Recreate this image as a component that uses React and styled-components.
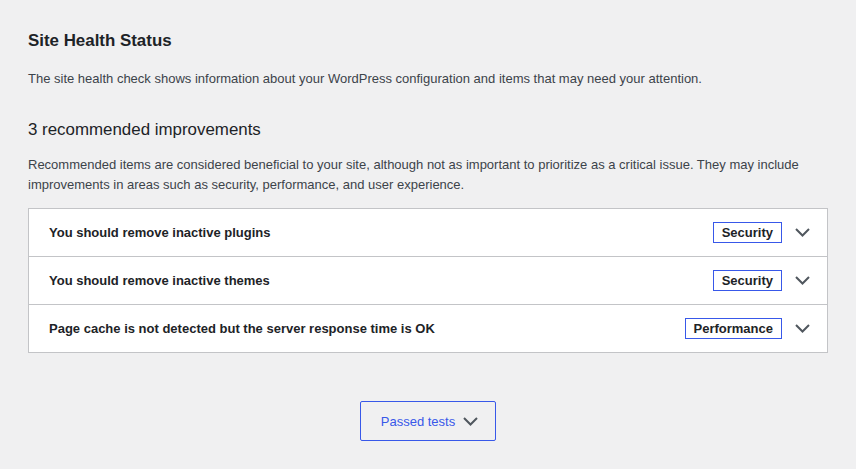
import React from "react";
import styled, { createGlobalStyle } from "styled-components";

const GlobalStyle = createGlobalStyle`
  html, body {
    margin: 0;
    padding: 0;
    background: #f0f0f1;
  }
  body {
    font-family: "Liberation Sans", Arial, sans-serif;
    font-size: 13px;
    color: #1d2327;
  }
`;

const Page = styled.div`
  padding: 29px 28px 0;
  min-height: 469px;
  box-sizing: border-box;
`;

const Title = styled.h2`
  margin: 0;
  font-size: 16.9px;
  line-height: 24px;
  font-weight: 700;
  color: #1d2327;
`;

const Text = styled.p`
  margin: ${p => p.$top || 0}px 0 0;
  font-size: 13px;
  line-height: 20px;
  color: #3c434a;
`;

const SubTitle = styled.h3`
  margin: 29px 0 0;
  font-size: 16.9px;
  line-height: 24px;
  font-weight: 400;
  color: #1d2327;
`;

const Accordion = styled.div`
  margin-top: 13px;
  background: #fff;
  border: 1px solid #c3c4c7;
  border-bottom: none;
`;

const Row = styled.div`
  display: flex;
  align-items: center;
  height: 47px;
  padding: 0 17px 0 20px;
  border-bottom: 1px solid #c3c4c7;
`;

const RowTitle = styled.span`
  flex: 1;
  font-weight: 700;
  font-size: 13px;
  color: #1d2327;
`;

const Badge = styled.span`
  display: inline-flex;
  align-items: center;
  height: 19px;
  padding: 0 8px;
  border: 1px solid #3858e9;
  font-weight: 700;
  font-size: 13px;
  color: #1d2327;
  margin-right: 13px;
`;

const Footer = styled.div`
  display: flex;
  justify-content: center;
  margin-top: 48px;
`;

const PassedButton = styled.button`
  display: flex;
  align-items: center;
  gap: 8px;
  height: 40px;
  padding: 0 17px 0 20px;
  background: transparent;
  border: 1px solid #3858e9;
  border-radius: 2px;
  font-family: "Liberation Sans", Arial, sans-serif;
  font-size: 13px;
  color: #3858e9;
  cursor: pointer;
`;

const Chevron = () => (
  <svg width="15" height="9" viewBox="0 0 15 9">
    <polyline
      points="1,1 7.5,7.5 14,1"
      fill="none"
      stroke="#50575e"
      strokeWidth="2"
    />
  </svg>
);

const items = [
  { title: "You should remove inactive plugins", badge: "Security" },
  { title: "You should remove inactive themes", badge: "Security" },
  {
    title: "Page cache is not detected but the server response time is OK",
    badge: "Performance"
  }
];

const App = () => {
  return (
    <>
      <GlobalStyle />
      <Page>
        <Title>Site Health Status</Title>
        <Text $top={16}>
          The site health check shows information about your WordPress
          configuration and items that may need your attention.
        </Text>
        <SubTitle>3 recommended improvements</SubTitle>
        <Text $top={13}>
          Recommended items are considered beneficial to your site, although
          not as important to prioritize as a critical issue. They may include
          improvements in areas such as security, performance, and user
          experience.
        </Text>
        <Accordion>
          {items.map(item => (
            <Row key={item.title}>
              <RowTitle>{item.title}</RowTitle>
              <Badge>{item.badge}</Badge>
              <Chevron />
            </Row>
          ))}
        </Accordion>
        <Footer>
          <PassedButton>
            Passed tests
            <Chevron />
          </PassedButton>
        </Footer>
      </Page>
    </>
  );
};

export default App;
